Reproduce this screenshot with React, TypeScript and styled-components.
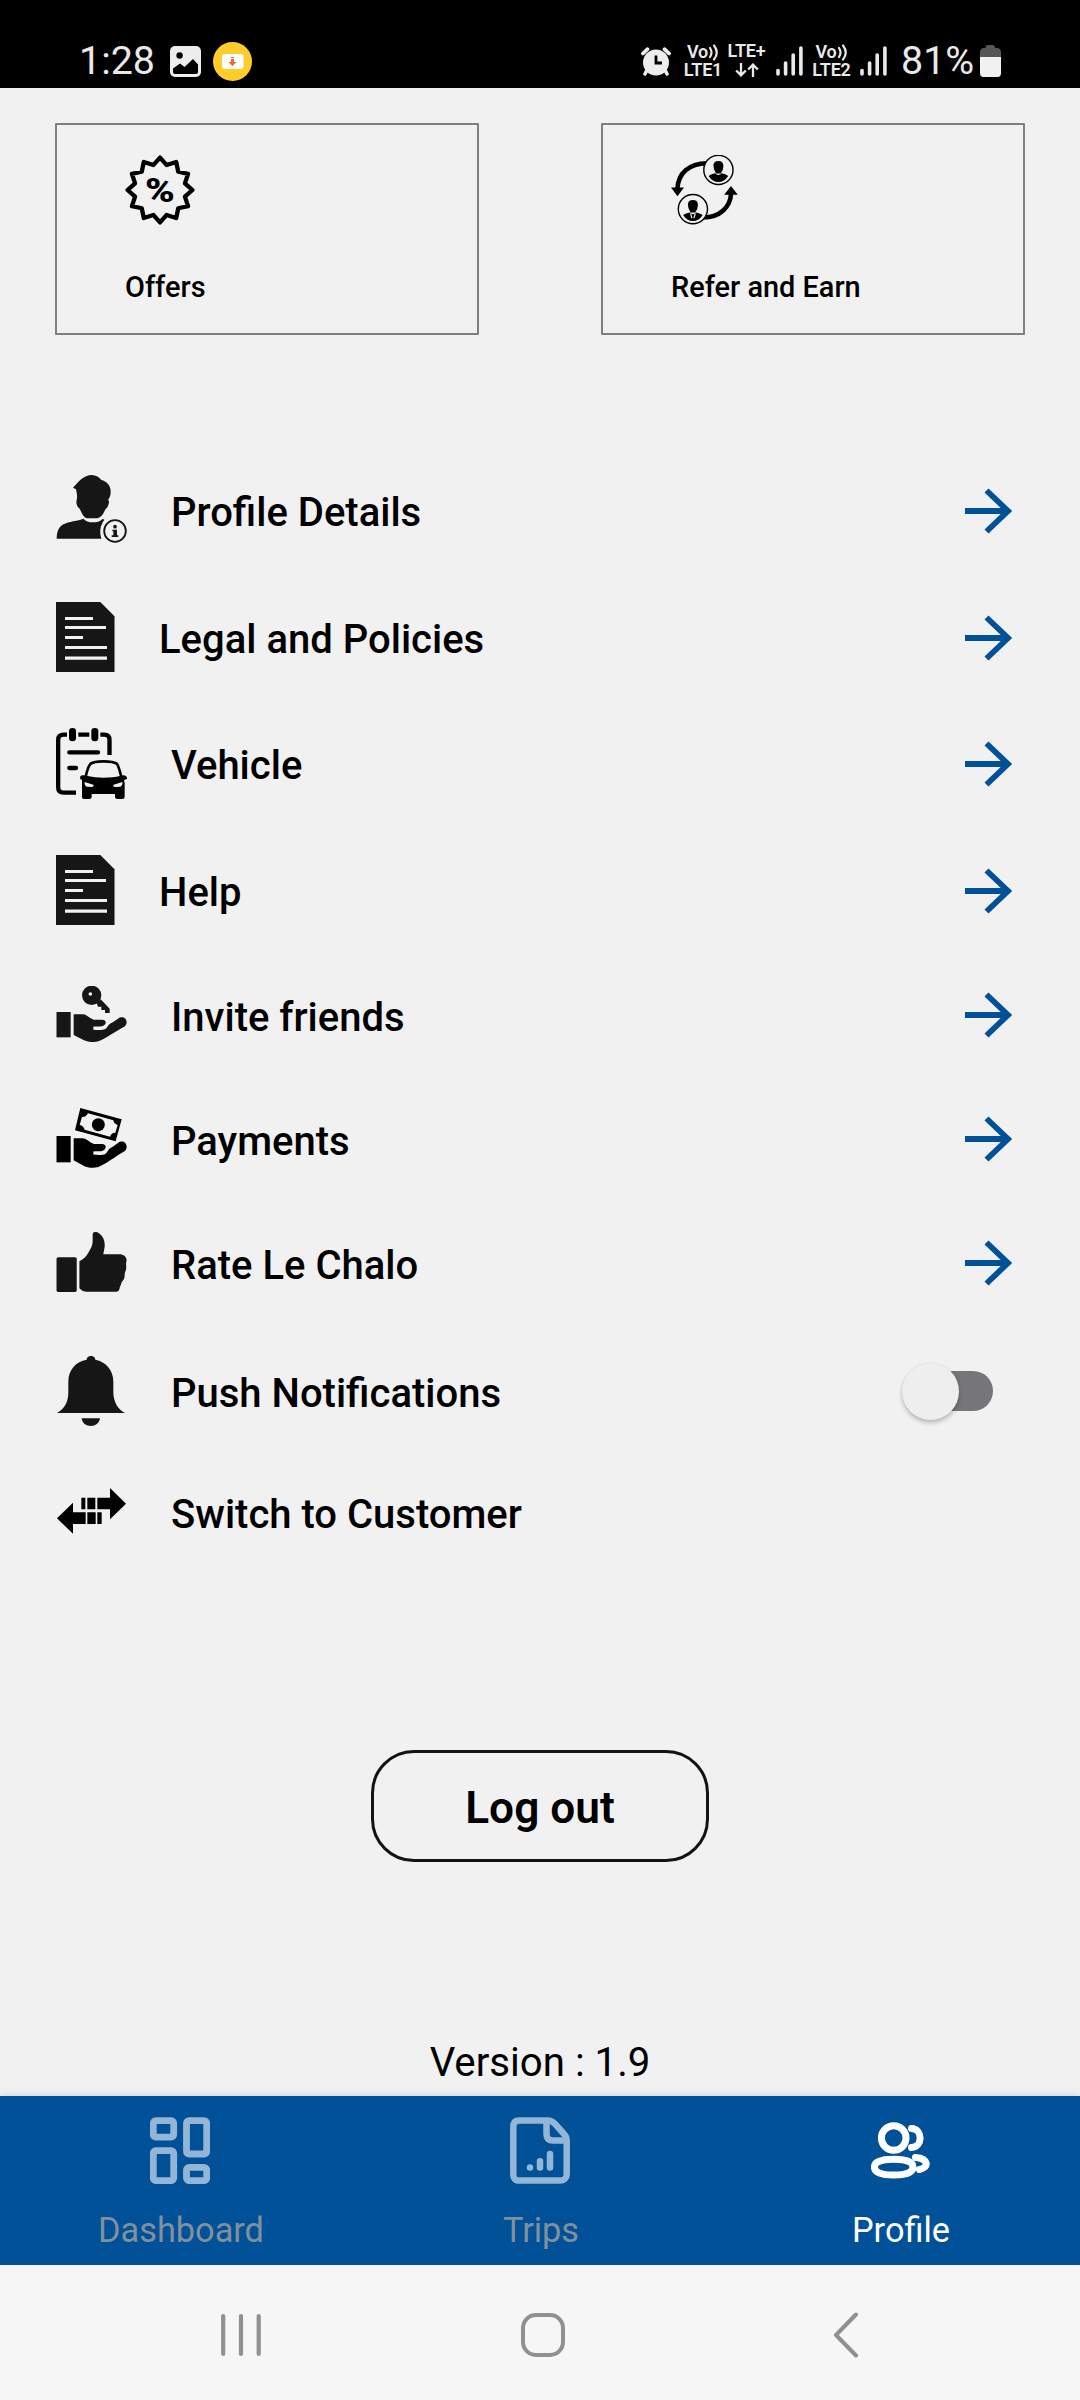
import React from 'react';
import styled, { createGlobalStyle } from 'styled-components';

const GlobalStyle = createGlobalStyle`
  * { box-sizing: border-box; }
  body { margin: 0; background: #f1f1f1; font-family: Roboto, "Liberation Sans", sans-serif; }
  svg { display: block; flex: none; }
  button { font: inherit; color: inherit; background: none; border: 0; padding: 0; margin: 0; text-align: left; }
`;

const PAGE = '#f1f1f1';
const BLUE = '#005198';
const INK = '#161616';

const Screen = styled.div`
  width: 1080px;
  height: 2400px;
  display: flex;
  flex-direction: column;
  overflow: hidden;
  background: ${PAGE};
`;

/* ---------- status bar ---------- */

const StatusBar = styled.header`
  height: 88px;
  flex: none;
  padding: 34px 79px 0 79px;
  background: #000;
  color: #e9e9e9;
  display: flex;
  align-items: center;
  justify-content: space-between;
`;

const StatusGroup = styled.div`
  display: flex;
  align-items: center;
`;

const StatusText = styled.span<{ $width: number }>`
  width: ${(p) => p.$width}px;
  font-size: 39.4px;
  line-height: 46px;
  white-space: nowrap;
  margin-top: -1px;
`;

const Spacer = styled.span<{ $w: number }>`
  width: ${(p) => p.$w}px;
  flex: none;
`;

const NetworkBlock = styled.div<{ $w: number }>`
  width: ${(p) => p.$w}px;
  height: 34px;
  display: flex;
  flex-direction: column;
  align-items: center;
  justify-content: space-between;
  font-size: 18px;
  font-weight: 600;
  letter-spacing: -0.2px;
  line-height: 16px;
  white-space: nowrap;
`;

const NetworkLine = styled.div<{ $up?: boolean }>`
  height: 16px;
  margin-top: ${(p) => (p.$up ? -1 : 0)}px;
  display: flex;
  align-items: center;
  gap: 1px;
`;

const ImageIcon = () => (
  <svg width="31" height="31" viewBox="0 0 31 31">
    <rect width="31" height="31" rx="5" fill="#ededed" />
    <circle cx="9.6" cy="9.5" r="3.2" fill="#000" />
    <path d="M3 22.5L10 17.5L14.5 21L23 13L28 18.5V26Q28 28 26 28H5Q3 28 3 26Z" fill="#000" />
  </svg>
);

const DownloadBadge = () => (
  <svg width="39" height="39" viewBox="0 0 39 39">
    <circle cx="19.5" cy="19.5" r="19.5" fill="#fdcd2c" />
    <rect x="9" y="12" width="21.5" height="15" rx="3" fill="#fff" />
    <path d="M18 15h3v1h-3zM18 17h3v3h2.5L19.5 24.3L15.5 20H18z" fill="#ee6a2b" />
  </svg>
);

const AlarmIcon = () => (
  <svg width="30" height="29" viewBox="0 0 30 29">
    <circle cx="15" cy="15.5" r="13" fill="#ededed" />
    <path d="M2 6.500L6.500 2.200M28 6.500L23.500 2.200" stroke="#ededed" strokeWidth="3.8" strokeLinecap="round" />
    <path d="M6 23L4 27M24 23L26 27" stroke="#ededed" strokeWidth="3.6" strokeLinecap="round" />
    <path d="M15 8.500V16H21" stroke="#000" strokeWidth="2.8" fill="none" />
  </svg>
);

const WaveIcon = () => (
  <svg width="10" height="17" viewBox="0 0 10 17">
    <path d="M1 4Q4 8.5 1 13M5 1.5Q10.5 8.5 5 15.5" fill="none" stroke="#e9e9e9" strokeWidth="2.2" strokeLinecap="round" />
  </svg>
);

const DataArrows = () => (
  <svg width="24" height="14" viewBox="0 0 24 14">
    <path d="M6 0V12.5M1.2 7.500L6 12.4L10.8 7.500M18 14V1.5M13.2 6.500L18 1.600L22.8 6.500" fill="none" stroke="#e9e9e9" strokeWidth="2.3" />
  </svg>
);

const SignalIcon = () => (
  <svg width="27" height="30" viewBox="0 0 27 30">
    <path d="M2 24.5V28M9.6 17V28M17.2 9V28M24.9 2V28" stroke="#e9e9e9" strokeWidth="3.6" strokeLinecap="round" />
  </svg>
);

const BatteryIcon = () => (
  <svg width="21" height="32" viewBox="0 0 21 32">
    <path d="M5.5 3Q5.5 0 8 0H12.5Q15 0 15 3H18Q21 4 21 7V12H0V7Q0 4 3 3Z" fill="#565656" />
    <path d="M0 12H21V28Q21 32 17.5 32H3.5Q0 32 0 28Z" fill="#f1f1f1" />
  </svg>
);

/* ---------- page content ---------- */

const Main = styled.main`
  height: 2008px;
  flex: none;
  padding: 35px 55px 0;
  display: flex;
  flex-direction: column;
  color: #000;
`;

const CardRow = styled.section`
  display: flex;
  justify-content: space-between;
`;

const Card = styled.button`
  width: 424px;
  height: 212px;
  border: 2px solid #7f7f7f;
  border-radius: 1px;
  padding: 30px 0 0 68px;
  display: flex;
  flex-direction: column;
  align-items: flex-start;
`;

const CardLabel = styled.span`
  margin-top: 46px;
  font-size: 28.9px;
  font-weight: 500;
  line-height: 33px;
`;

const Menu = styled.section`
  margin-top: 140px;
  display: flex;
  flex-direction: column;
`;

const MenuRow = styled.div<{ $after: number }>`
  height: 70px;
  margin-bottom: ${(p) => p.$after}px;
  padding: 0 12px 0 1px;
  display: flex;
  align-items: center;
`;

const MenuLabel = styled.span<{ $drop: number }>`
  margin-left: 44px;
  padding-top: ${(p) => p.$drop}px;
  flex: 1;
  font-size: 40px;
  font-weight: 500;
  line-height: 46px;
  white-space: nowrap;
`;

const SwitchTrack = styled.button`
  width: 83px;
  height: 40px;
  margin-right: 20px;
  border-radius: 20px;
  background: #767678;
  display: flex;
  align-items: center;
`;

const SwitchThumb = styled.span`
  width: 57px;
  height: 57px;
  margin-left: -8.5px;
  flex: none;
  border-radius: 50%;
  background: #eeeeee;
  box-shadow: 0 3px 4px rgba(0, 0, 0, 0.22), 0 0 2px rgba(0, 0, 0, 0.1);
`;

const LogoutButton = styled.button`
  width: 338px;
  height: 112px;
  margin-top: 204px;
  align-self: center;
  border: 3px solid #131313;
  border-radius: 43px;
  padding-top: 4px;
  display: flex;
  align-items: center;
  justify-content: center;
  font-size: 44.2px;
  font-weight: 600;
`;

const Version = styled.p`
  margin: 178px 0 0;
  text-align: center;
  font-size: 40.2px;
  line-height: 46px;
`;

/* ---------- menu icons ---------- */

const PercentBadge = () => {
  const points = Array.from({ length: 24 }, (_, i) => {
    const r = i % 2 ? 25.8 : 32.4;
    const a = (i * Math.PI) / 12;
    return `${(35 + r * Math.sin(a)).toFixed(2)},${(35 - r * Math.cos(a)).toFixed(2)}`;
  }).join(' ');
  return (
    <svg width="70" height="70" viewBox="0 0 70 70">
      <polygon points={points} fill="none" stroke="#000" strokeWidth="4.3" strokeLinejoin="round" />
      <text transform="translate(35 46.5) scale(1.22 1)" textAnchor="middle" fontFamily="Roboto" fontWeight="900" fontSize="33" fill="#000">%</text>
    </svg>
  );
};

const Person = ({ x, y, tie }: { x: number; y: number; tie?: boolean }) => (
  <g transform={`translate(${x} ${y})`}>
    <circle r="14.6" fill={PAGE} stroke="#000" strokeWidth="1.4" />
    <path d="M-5 -5Q-4.5 -9 0 -9Q5 -9 5 -4Q5 0 2.8 2.5V3.5H-2.8V2.5Q-5 0 -5 -5Z" fill="#000" />
    <path d="M-9.8 6Q-8 4.5 -3.5 3.4Q0 7 3.5 3.4Q8 4.5 9.8 6Q6 12 0 12Q-6 12 -9.8 6Z" fill="#000" />
    {tie && <path d="M-2.4 4.5L-1 9M2.4 4.5L1 9" stroke={PAGE} strokeWidth="1.2" />}
  </g>
);

const ReferIcon = () => (
  <svg width="70" height="70" viewBox="0 0 70 70">
    <path d="M36 8.2C18 8.5 7 18 6.4 34" fill="none" stroke="#000" strokeWidth="4.6" />
    <path d="M0 32.4L13 32.4L6.5 41.2Z" fill="#000" />
    <path d="M32 62.5C49 62.5 59.5 52 60.1 38" fill="none" stroke="#000" strokeWidth="4.6" />
    <path d="M53.2 39.7L66.8 39.7L60 31Z" fill="#000" />
    <Person x={47.4} y={14.9} />
    <Person x={21.9} y={54.1} tie />
  </svg>
);

const ProfileIcon = () => (
  <svg width="71" height="70" viewBox="48 75 213 210" fill={INK}>
    <path d="M99 113C115 95 132 75 155 75C168 75 178 82 184 90C200 93 213 108 212 126C212 138 208 144 204 150C209 152 207 160 204 168C202 174 197 176 195 180C190 192 182 205 168 205H142C130 203 124 186 119 176C112 172 107 160 110 150C113 140 110 128 108 118Z" />
    <path d="M50 266C51 245 55 232 70 223C85 214 115 213 130 206C138 214 146 217 158 217C170 217 180 215 189 206L193 210C183 222 177 240 184 266Z" />
    <circle cx="225" cy="243" r="32.5" fill="none" stroke={INK} strokeWidth="5.5" />
    <circle cx="225" cy="230" r="5.5" />
    <path d="M217 239H231V256H235V261H215V256H220V244H217Z" />
  </svg>
);

const DocumentIcon = () => (
  <svg width="59" height="70" viewBox="48 456 177 210">
    <path d="M48 456H181L223.5 499V666H48Z" fill={INK} />
    <path d="M75 505.5H159M75 532.5H198M75 562.5H129M75 592.5H201M75 624.5H201" stroke={PAGE} strokeWidth="9.5" />
  </svg>
);

const VehicleIcon = () => (
  <svg width="71" height="71" viewBox="48 84 213 213">
    <g fill="none" stroke="#000" strokeWidth="13">
      <path d="M81 104H71Q54.5 104 54.5 120V262Q54.5 278 71 278H108M115 104H148M181 104H193Q208.5 104 208.5 120V165" />
      <path d="M88 157H174M88 204H108" strokeLinecap="round" />
    </g>
    <rect x="87" y="84" width="21" height="40" rx="10" />
    <rect x="154" y="84" width="21" height="40" rx="10" />
    <path d="M137 231C141 212 147 196 152 191C160 185 180 184 190 184C204 184 222 185 230 191C236 197 240 215 244 231" fill="none" stroke="#000" strokeWidth="8" />
    <path d="M120 232Q121 224 132 226L142 228Q165 233 190 233Q220 233 240 228L250 226Q261 226 261 237L252 240L254 250V290Q254 297 247 297H232Q225 297 225 289V282H155V289Q155 297 148 297H132Q126 297 126 290V239L121 238Z" />
    <path d="M134 246L160 254Q163 260 155 261L140 260Q132 256 134 246ZM247 246L221 254Q217 260 226 261L241 260Q249 256 247 246Z" fill={PAGE} />
  </svg>
);

const HAND =
  'M101 160H128C140 160 148 172 162 176H186C200 176 201 190 188 195C180 198 170 195 160 197V206C172 207 188 208 196 204C204 198 205 188 216 185L234 173C245 164 260 170 260 184C260 190 257 195 250 199C225 212 195 235 175 241C160 245 142 243 132 238L101 222Z';

const InviteIcon = () => (
  <svg width="71" height="56" viewBox="48 75 213 168" fill={INK}>
    <rect x="49.5" y="153" width="42.5" height="76" />
    <path d={HAND} />
    <path fillRule="evenodd" d="M126 103a29 29 0 1 0 58 0a29 29 0 1 0 -58 0ZM145.500 99a5.500 5.500 0 1 1 11 0a5.500 5.500 0 1 1 -11 0Z" />
    <path d="M170 126L182 115L209 143V156H195V147H184V137H174Z" />
  </svg>
);

const PaymentsIcon = () => (
  <svg width="71" height="60" viewBox="48 444 213 180">
    <rect x="49.5" y="528" width="42.5" height="79" />
    <path d={HAND} transform="translate(0 535) scale(1 1.06) translate(0 -160)" />
    <path d="M121 444L245 478L227 544L105 511Z" />
    <path d="M144 460L220 481Q222 492 233 495L226 518Q214 518 210 530L134 509Q131 498 119 494L126 471Q138 472 144 460Z" fill={PAGE} />
    <circle cx="175" cy="494" r="19.5" />
  </svg>
);

const ThumbIcon = () => (
  <svg width="71" height="60" viewBox="48 66 213 181" fill={INK}>
    <rect x="49" y="142" width="61" height="105" rx="5" />
    <path d="M118 154C130 148 140 140 147 125C155 112 158 105 158 92V75C158 64 168 64 176 69C190 78 196 93 194 112L190 133H238C252 133 262 141 260 154C257 162 261 172 258 182C252 192 257 202 251 210C242 220 246 222 240 232C239 241 236 246 230 246H138C128 246 122 240 118 236Z" />
  </svg>
);

const BellIcon = () => (
  <svg width="71" height="70" viewBox="48 438 213 210" fill={INK}>
    <path d="M51 609C78 594 85 570 85 545V515C85 478 108 455 140 449C140 434 166 434 166 449C198 455 220 480 220 515V545C220 570 230 596 255 609Z" />
    <path d="M125 625H180C178 640 166 648 153 648C138 648 126 640 125 625Z" />
  </svg>
);

const SwapIcon = () => (
  <svg width="71" height="46" viewBox="48 835 213 138">
    <path d="M172 864H210V835L258 882L210 929V899H172ZM124 864H136V899H124ZM142 864H166V899H142Z" />
    <path d="M51 926L99 879V908H137V943H99V972ZM142 908H167V943H142ZM172 908H185V943H172Z" />
  </svg>
);

const ArrowSvg = styled.svg`
  margin-top: 2px;
`;

const ArrowRight = () => (
  <ArrowSvg width="48" height="46" viewBox="0 0 48 46">
    <path d="M0 23H42M21.500 2.500L43 23L21.500 43.500" fill="none" stroke={BLUE} strokeWidth="5.8" />
  </ArrowSvg>
);

/* ---------- bottom navigation ---------- */

const TabBar = styled.nav`
  height: 169px;
  flex: none;
  display: grid;
  grid-template-columns: repeat(3, 1fr);
  background: ${BLUE};
  box-shadow: 0 0 8px rgba(0, 0, 0, 0.14);
`;

const Tab = styled.button<{ $active?: boolean }>`
  display: flex;
  flex-direction: column;
  align-items: center;
  color: ${(p) => (p.$active ? '#fff' : '#80909d')};
  font-size: 34.3px;
  line-height: 40px;
`;

const TabIcon = styled.span`
  height: 67px;
  margin: 21px 0 26px;
  display: flex;
  align-items: center;
`;

const TabLabel = styled.span`
  padding-left: 2px;
`;

const DashboardIcon = () => (
  <svg width="60" height="67" viewBox="0 0 60 67" fill="none" stroke="#93b5d6" strokeWidth="6.8">
    <rect x="3.3" y="3.6" width="20.4" height="16.500" rx="2.6" />
    <rect x="3.3" y="33.700" width="20.400" height="30" rx="2.6" />
    <rect x="36.500" y="3.600" width="20.200" height="33.400" rx="2.6" />
    <rect x="36.500" y="50.300" width="20.200" height="13.400" rx="2.6" />
  </svg>
);

const TripsIcon = () => (
  <svg width="60" height="67" viewBox="0 0 60 67" fill="none" stroke="#93b5d6" strokeWidth="6.5">
    <path d="M9 3.500H37C41 3.500 43 4.500 45 7L54 17C56 19 56.700 21 56.700 24V57.500C56.700 61 54 63.600 50 63.600H9C5 63.600 3.300 61 3.300 57.500V10C3.300 6 5 3.500 9 3.500Z" />
    <path d="M36.500 3.500V17Q36.500 23.500 43 23.500H56" />
    <path d="M20 50.400V50.500M30 44.200V50.500M40 37V50.500" strokeLinecap="round" />
  </svg>
);

const PeopleIcon = () => (
  <svg width="59" height="57" viewBox="0 0 59 57" fill="none" stroke="#fff" strokeWidth="7" strokeLinecap="round">
    <path d="M40.500 6.500C52 7 52 25 40.500 25.500" />
    <path d="M44.500 35.500C57.500 36.500 58.500 45.500 48.500 47.500" />
    <circle cx="22.700" cy="16" r="12.300" />
    <path d="M22.700 37.200C38 37.200 42 41 42 45C42 50 36 53 22.700 53C9.500 53 3.400 50 3.400 45C3.400 41 8 37.200 22.700 37.200Z" />
  </svg>
);

const SystemNav = styled.footer`
  flex: 1;
  background: #f6f6f6;
  display: flex;
  align-items: center;
  padding: 5px 221px 0 220px;
  justify-content: space-between;
`;

const HomeIcon = styled.svg`
  margin-left: -9px;
`;

/* ---------- screen ---------- */

type Item = {
  label: string;
  icon: React.ReactNode;
  drop: number;
  after: number;
  action?: 'arrow' | 'switch';
};

const items: Item[] = [
  { label: 'Profile Details', icon: <ProfileIcon />, drop: 6, after: 57, action: 'arrow' },
  { label: 'Legal and Policies', icon: <DocumentIcon />, drop: 6, after: 56, action: 'arrow' },
  { label: 'Vehicle', icon: <VehicleIcon />, drop: 6, after: 57, action: 'arrow' },
  { label: 'Help', icon: <DocumentIcon />, drop: 6, after: 54, action: 'arrow' },
  { label: 'Invite friends', icon: <InviteIcon />, drop: 8, after: 54, action: 'arrow' },
  { label: 'Payments', icon: <PaymentsIcon />, drop: 8, after: 54, action: 'arrow' },
  { label: 'Rate Le Chalo', icon: <ThumbIcon />, drop: 8, after: 59, action: 'arrow' },
  { label: 'Push Notifications', icon: <BellIcon />, drop: 6, after: 50, action: 'switch' },
  { label: 'Switch to Customer', icon: <SwapIcon />, drop: 8, after: 0 },
];

export default function App() {
  return (
    <>
      <GlobalStyle />
      <Screen>
        <StatusBar>
          <StatusGroup>
            <StatusText $width={91}>1:28</StatusText>
            <ImageIcon />
            <Spacer $w={12} />
            <DownloadBadge />
          </StatusGroup>
          <StatusGroup>
            <AlarmIcon />
            <Spacer $w={12} />
            <NetworkBlock $w={40}>
              <NetworkLine>Vo<WaveIcon /></NetworkLine>
              <NetworkLine>LTE1</NetworkLine>
            </NetworkBlock>
            <Spacer $w={3.5} />
            <NetworkBlock $w={40}>
              <NetworkLine $up>LTE+</NetworkLine>
              <NetworkLine><DataArrows /></NetworkLine>
            </NetworkBlock>
            <Spacer $w={9.5} />
            <SignalIcon />
            <Spacer $w={8.5} />
            <NetworkBlock $w={40}>
              <NetworkLine>Vo<WaveIcon /></NetworkLine>
              <NetworkLine>LTE2</NetworkLine>
            </NetworkBlock>
            <Spacer $w={8.5} />
            <SignalIcon />
            <Spacer $w={14} />
            <StatusText $width={79}>81%</StatusText>
            <BatteryIcon />
          </StatusGroup>
        </StatusBar>

        <Main>
          <CardRow>
            <Card>
              <PercentBadge />
              <CardLabel>Offers</CardLabel>
            </Card>
            <Card>
              <ReferIcon />
              <CardLabel>Refer and Earn</CardLabel>
            </Card>
          </CardRow>

          <Menu>
            {items.map((item) => (
              <MenuRow key={item.label} $after={item.after}>
                {item.icon}
                <MenuLabel $drop={item.drop}>{item.label}</MenuLabel>
                {item.action === 'arrow' && <ArrowRight />}
                {item.action === 'switch' && (
                  <SwitchTrack aria-label={item.label}>
                    <SwitchThumb />
                  </SwitchTrack>
                )}
              </MenuRow>
            ))}
          </Menu>

          <LogoutButton>Log out</LogoutButton>
          <Version>Version : 1.9</Version>
        </Main>

        <TabBar>
          <Tab>
            <TabIcon><DashboardIcon /></TabIcon>
            <TabLabel>Dashboard</TabLabel>
          </Tab>
          <Tab>
            <TabIcon><TripsIcon /></TabIcon>
            <TabLabel>Trips</TabLabel>
          </Tab>
          <Tab $active>
            <TabIcon><PeopleIcon /></TabIcon>
            <TabLabel>Profile</TabLabel>
          </Tab>
        </TabBar>

        <SystemNav>
          <svg width="42" height="44" viewBox="0 0 42 44">
            <path d="M3.200 3V41M21 3V41M38.700 3V41" stroke="#909090" strokeWidth="4.200" strokeLinecap="round" />
          </svg>
          <HomeIcon width="44" height="44" viewBox="0 0 44 44">
            <rect x="2" y="2" width="40" height="40" rx="13" fill="none" stroke="#909090" strokeWidth="4" />
          </HomeIcon>
          <svg width="26" height="46" viewBox="0 0 26 46">
            <path d="M23 2.500L3 23L23 43.500" fill="none" stroke="#909090" strokeWidth="4" strokeLinecap="round" strokeLinejoin="round" />
          </svg>
        </SystemNav>
      </Screen>
    </>
  );
}
